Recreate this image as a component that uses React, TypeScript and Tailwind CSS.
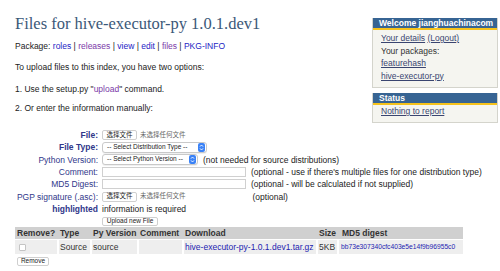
import React from "react";

const sans = { fontFamily: '"Liberation Sans", Arial, "Noto Sans CJK SC", sans-serif' };

function Stepper() {
  return (
    <span className="inline-flex h-[9px] w-[7px] items-center justify-center rounded-[2px] bg-[#3b82f6]">
      <svg width="5" height="7" viewBox="0 0 5 7">
        <path d="M1 2.6 L2.5 1 L4 2.6" stroke="white" strokeWidth="0.9" fill="none" />
        <path d="M1 4.4 L2.5 6 L4 4.4" stroke="white" strokeWidth="0.9" fill="none" />
      </svg>
    </span>
  );
}

function Select({ text, w }: { text: string; w: string }) {
  return (
    <span className={`inline-flex h-[11px] items-center justify-between rounded-[3px] border border-[#c9c9c9] bg-white pl-[4px] pr-[1px] shadow-[0_1px_0_rgba(0,0,0,0.06)] ${w}`}>
      <span className="whitespace-nowrap text-[6.5px] leading-none text-[#222]">{text}</span>
      <Stepper />
    </span>
  );
}

function FileBtn() {
  return (
    <span className="inline-flex items-center gap-[3px] whitespace-nowrap">
      <span className="inline-flex h-[10px] w-[35px] items-center justify-center rounded-[2px] border border-[#cfcfcf] bg-white text-[6.5px] leading-none text-[#222]">选择文件</span>
      <span className="text-[6.5px] leading-none text-[#666]">未选择任何文件</span>
    </span>
  );
}

export default function App() {
  return (
    <div className="relative h-[271px] w-[500px] overflow-hidden bg-white text-[8.5px] text-[#222]" style={sans}>
      <div className="float-right mr-[2px] mt-[18px] w-[126px]">
        <div className="border border-[#d4d4cc] border-t-0 bg-[#f5f5f0]">
          <div className="h-[12px] border-b-2 border-[#f6c21b] bg-[#376493] pl-[6px] text-[8.5px] font-bold leading-[10px] text-white">Welcome jianghuachinacom</div>
          <div className="flex flex-col px-[8px] pb-[5px] pt-[2px] text-[8.5px] leading-[12.5px] text-[#333]">
            <div><span className="text-[#3a4570] underline">Your details</span> <span className="text-[#3a4570] underline">(Logout)</span></div>
            <div>Your packages:</div>
            <div className="text-[#3a4570] underline">featurehash</div>
            <div className="text-[#3a4570] underline">hive-executor-py</div>
          </div>
        </div>
        <div className="mt-[5px] border border-[#d4d4cc] border-t-0 bg-[#f5f5f0]">
          <div className="h-[12px] border-b-2 border-[#f6c21b] bg-[#376493] pl-[6px] text-[8.5px] font-bold leading-[10px] text-white">Status</div>
          <div className="px-[8px] pb-[5px] text-[8.5px] leading-[12px] text-[#3a4570] underline">Nothing to report</div>
        </div>
      </div>

      <div className="pl-[15px] pt-[14px]">
        <h1 className="text-[16.5px] leading-[20px] text-[#3b5878]" style={{ fontFamily: '"Liberation Serif", "Times New Roman", serif' }}>
          Files for hive-executor-py 1.0.1.dev1
        </h1>
        <div className="mt-[7px] leading-[10px]">
          Package: <span className="text-[#2424c4]">roles</span> | <span className="text-[#7b3aa8]">releases</span> | <span className="text-[#2424c4]">view</span> | <span className="text-[#2424c4]">edit</span> | <span className="text-[#7b3aa8]">files</span> | <span className="text-[#2424c4]">PKG-INFO</span>
        </div>
        <div className="mt-[11px] leading-[10px]">To upload files to this index, you have two options:</div>
        <div className="mt-[12px] leading-[10px]">1. Use the setup.py "<span className="text-[#7b3aa8]">upload</span>" command.</div>
        <div className="mt-[9px] leading-[10px]">2. Or enter the information manually:</div>

        <div className="mt-[16px] grid auto-rows-[12.3px] grid-cols-[83px_auto] items-center gap-x-[4px] whitespace-nowrap leading-[10px] text-[#30378a]">
          <div className="text-right font-bold">File:</div>
          <div className="flex"><FileBtn /></div>
          <div className="text-right font-bold">File Type:</div>
          <div className="flex"><Select text="-- Select Distribution Type --" w="w-[105px]" /></div>
          <div className="text-right">Python Version:</div>
          <div className="flex items-center gap-[5px] text-[#222]"><Select text="-- Select Python Version --" w="w-[96px]" /><span>(not needed for source distributions)</span></div>
          <div className="text-right">Comment:</div>
          <div className="flex items-center gap-[5px] text-[#222]"><span className="h-[10px] w-[144px] border border-[#d0d0d0] bg-white" /><span>(optional - use if there's multiple files for one distribution type)</span></div>
          <div className="text-right">MD5 Digest:</div>
          <div className="flex items-center gap-[5px] text-[#222]"><span className="h-[10px] w-[144px] border border-[#d0d0d0] bg-white" /><span>(optional - will be calculated if not supplied)</span></div>
          <div className="text-right">PGP signature (.asc):</div>
          <div className="flex items-center gap-[67px] text-[#222]"><FileBtn /><span>(optional)</span></div>
          <div className="text-right font-bold">highlighted</div>
          <div className="text-[#222]">information is required</div>
          <div />
          <div className="flex"><span className="inline-flex h-[9px] w-[56px] items-center justify-center rounded-[2px] border border-[#cfcfcf] bg-white text-[6.5px] leading-none text-[#222]">Upload new File</span></div>
        </div>

        <table className="w-[448px] table-fixed border-collapse text-[8.5px] leading-[12px] text-[#333]">
          <colgroup>
            <col className="w-[43px]" />
            <col className="w-[33px]" />
            <col className="w-[47px]" />
            <col className="w-[45px]" />
            <col className="w-[134px]" />
            <col className="w-[21px]" />
            <col className="w-[125px]" />
          </colgroup>
          <thead>
            <tr className="bg-[#d0d0d0] text-left font-bold">
              <th className="whitespace-nowrap pl-[2px]">Remove?</th>
              <th className="whitespace-nowrap pl-[2px]">Type</th>
              <th className="whitespace-nowrap pl-[2px]">Py Version</th>
              <th className="whitespace-nowrap pl-[2px]">Comment</th>
              <th className="whitespace-nowrap pl-[2px]">Download</th>
              <th className="whitespace-nowrap pl-[2px]">Size</th>
              <th className="whitespace-nowrap pl-[4px]">MD5 digest</th>
            </tr>
          </thead>
          <tbody>
            <tr className="h-[14px]">
              <td className="border-t border-white bg-[#eeeeee] pl-[4px]"><span className="block h-[7px] w-[7px] rounded-[1px] border border-[#c4c4c4] bg-white" /></td>
              <td className="border-l-2 border-t border-white bg-[#eeeeee] pl-[1px]">Source</td>
              <td className="border-l-2 border-t border-white bg-[#eeeeee] pl-[1px]">source</td>
              <td className="border-l-2 border-t border-white bg-[#eeeeee]"></td>
              <td className="whitespace-nowrap border-l-2 border-t border-white bg-[#eeeeee] pl-[1px] text-[#2323b0]">hive-executor-py-1.0.1.dev1.tar.gz</td>
              <td className="border-l-2 border-t border-white bg-[#eeeeee] pl-[1px]">5KB</td>
              <td className="whitespace-nowrap border-l-2 border-t border-white bg-[#eeeeee] pl-[2px] text-[6.7px] text-[#2323b0]">bb73e307340cfc403e5e14f9b96955c0</td>
            </tr>
          </tbody>
        </table>
        <div className="mt-[3px] flex pl-[2px]"><span className="inline-flex h-[9px] w-[32px] items-center justify-center rounded-[2px] border border-[#cfcfcf] bg-white text-[6.5px] leading-none text-[#222]">Remove</span></div>
      </div>
    </div>
  );
}
